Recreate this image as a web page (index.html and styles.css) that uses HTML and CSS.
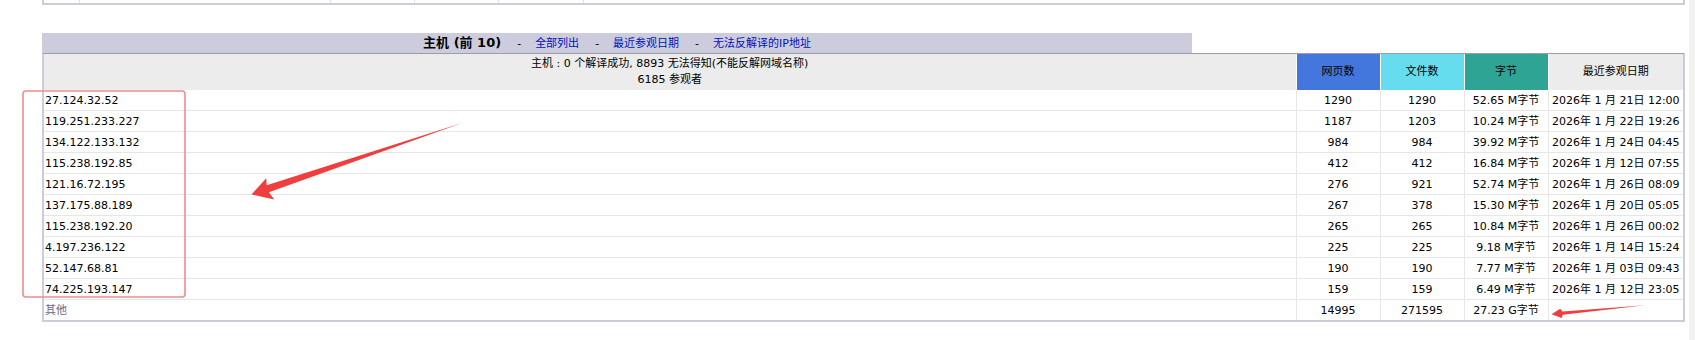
FILE: index.html
```html
<!DOCTYPE html>
<html lang="zh-CN">
<head>
<meta charset="utf-8">
<title>主机 (前 10)</title>
<link rel="stylesheet" href="styles.css">
</head>
<body>
<div class="screen">
  <main class="page">
    <div class="prev">
      <span class="pc c1"></span><span class="pc c2"></span><span class="pc c3"></span><span class="pc c4"></span><span class="pc c5"></span><span class="pc c6"></span>
    </div>

    <section class="hosts">
      <div class="title-row">
        <div class="title">主机 (前 10)<span class="sep">-</span><a class="lnk" href="#">全部列出</a><span class="sep">-</span><a class="lnk" href="#">最近参观日期</a><span class="sep">-</span><a class="lnk" href="#">无法反解译的IP地址</a></div>
        <div class="blank"></div>
      </div>
      <div class="data-wrap">
        <table class="data">
          <colgroup>
            <col><col class="w-num"><col class="w-num"><col class="w-num"><col class="w-date">
          </colgroup>
          <thead>
            <tr>
              <th class="h-host">主机 : 0 个解译成功, 8893 无法得知(不能反解网域名称)<br>6185 参观者</th>
              <th class="h-pages">网页数</th>
              <th class="h-hits">文件数</th>
              <th class="h-bw">字节</th>
              <th class="h-date">最近参观日期</th>
            </tr>
          </thead>
          <tbody>
            <tr><td class="host">27.124.32.52</td><td>1290</td><td>1290</td><td>52.65 M字节</td><td>2026年 1 月 21日 12:00</td></tr>
            <tr><td class="host">119.251.233.227</td><td>1187</td><td>1203</td><td>10.24 M字节</td><td>2026年 1 月 22日 19:26</td></tr>
            <tr><td class="host">134.122.133.132</td><td>984</td><td>984</td><td>39.92 M字节</td><td>2026年 1 月 24日 04:45</td></tr>
            <tr><td class="host">115.238.192.85</td><td>412</td><td>412</td><td>16.84 M字节</td><td>2026年 1 月 12日 07:55</td></tr>
            <tr><td class="host">121.16.72.195</td><td>276</td><td>921</td><td>52.74 M字节</td><td>2026年 1 月 26日 08:09</td></tr>
            <tr><td class="host">137.175.88.189</td><td>267</td><td>378</td><td>15.30 M字节</td><td>2026年 1 月 20日 05:05</td></tr>
            <tr><td class="host">115.238.192.20</td><td>265</td><td>265</td><td>10.84 M字节</td><td>2026年 1 月 26日 00:02</td></tr>
            <tr><td class="host">4.197.236.122</td><td>225</td><td>225</td><td>9.18 M字节</td><td>2026年 1 月 14日 15:24</td></tr>
            <tr><td class="host">52.147.68.81</td><td>190</td><td>190</td><td>7.77 M字节</td><td>2026年 1 月 03日 09:43</td></tr>
            <tr><td class="host">74.225.193.147</td><td>159</td><td>159</td><td>6.49 M字节</td><td>2026年 1 月 12日 23:05</td></tr>
            <tr class="others"><td class="host"><span class="other-label">其他</span></td><td>14995</td><td>271595</td><td>27.23 G字节</td><td></td></tr>
          </tbody>
        </table>
      </div>
    </section>
  </main>
  <div class="scroll-track"></div>

  <svg class="annot" width="1695" height="340" viewBox="0 0 1695 340" aria-hidden="true">
    <rect x="23" y="91" width="162" height="206" rx="3" ry="3" fill="none" stroke="#ee8c8c" stroke-width="1.6"/>
    <polygon points="462,123 266.7,185.3 266.2,178.2 251.5,194.5 274.2,199.5 268.9,192.2" fill="#f03e3e"/>
    <polygon points="1645,305.3 1562.5,311.6 1560.2,308.8 1551.5,314.2 1561.8,318 1562.8,314.8" fill="#f03e3e"/>
  </svg>
</div>
</body>
</html>
```
FILE: styles.css
```css
html, body {
  margin: 0;
  padding: 0;
  background: #ffffff;
}

body {
  font-family: "DejaVu Sans", "Noto Sans CJK SC", sans-serif;
  font-size: 11px;
  color: #000000;
}

.screen {
  position: relative;
  display: flex;
  width: 1695px;
  height: 340px;
  overflow: hidden;
}

.page {
  flex: 1;
  padding: 0 4px 0 42px;
  min-width: 0;
}

.scroll-track {
  width: 6px;
  background: #f1f1f1;
}

/* tail of the previous section's table */
.prev {
  display: grid;
  grid-template-columns: 36px 251px 84px 84px 85px 1fr;
  height: 3px;
  border: 2px solid #ccccdd;
  border-top: 0;
  background: #ffffff;
}

.pc {
  border-right: 1px solid #e0e0e0;
}

.pc.c6 {
  border-right: 0;
}

/* hosts section */
.hosts {
  margin-top: 28px;
}

.title-row {
  display: flex;
  height: 20px;
}

.title {
  width: 70%;
  background: #ccccdd;
  text-align: center;
  font-weight: bold;
  font-size: 13px;
  line-height: 20px;
  white-space: nowrap;
}

.blank {
  flex: 1;
  background: #ffffff;
}

.sep {
  font-weight: normal;
  font-size: 11px;
  margin: 0 14px 0 16px;
}

.lnk {
  font-weight: normal;
  font-size: 11px;
  color: #0011bb;
  text-decoration: none;
}

.data-wrap {
  border: 2px solid #ccccdd;
  border-top: 1px solid #9c9caa;
  background: #ffffff;
}

.data {
  width: 100%;
  border-collapse: collapse;
  table-layout: fixed;
}

.w-num { width: 84px; }
.w-date { width: 135px; }

.data th {
  font-weight: normal;
  font-size: 11px;
  line-height: 16px;
  padding: 2px 2px;
  height: 32px;
  text-align: center;
  border-left: 1px solid #ffffff;
  white-space: nowrap;
}

.data th.h-host {
  border-left: 0;
  background: #ececec;
}

.h-pages { background: #4477dd; }
.h-hits { background: #66ddee; }
.h-bw { background: #2ea495; }
.h-date { background: #ececec; }

.data td {
  font-size: 11px;
  line-height: 16px;
  padding: 3px 2px 1px;
  text-align: center;
  border-bottom: 1px solid #e6e6e6;
  border-left: 1px solid #e6e6e6;
  white-space: nowrap;
  overflow: hidden;
}

.data td.host {
  text-align: left;
  border-left: 0;
  padding-left: 1px;
}

.data tr.others td {
  border-bottom: 0;
}

.other-label {
  color: #666688;
}

.annot {
  position: absolute;
  left: 0;
  top: 0;
  pointer-events: none;
}
```
